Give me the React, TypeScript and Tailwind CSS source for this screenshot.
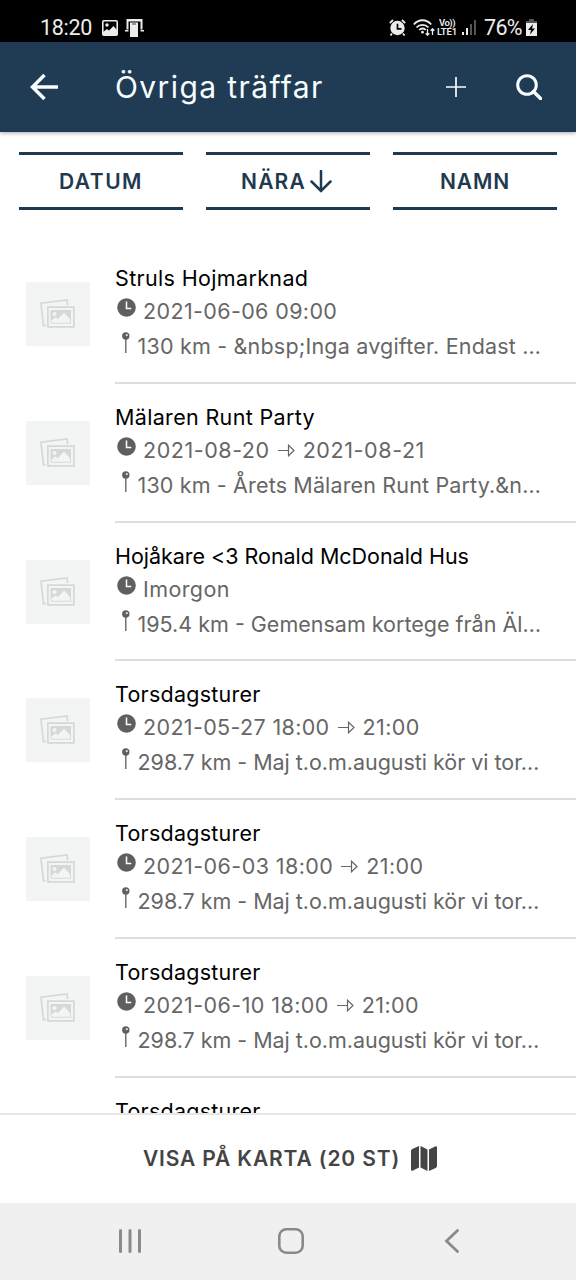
import clsx from 'clsx';

interface Meetup {
  title: string;
  titleClass: string;
  date?: string;
  dateClass?: string;
  end?: string;
  endClass?: string;
  info?: string;
  infoClass?: string;
}

const thursday = {
  title: 'Torsdagsturer',
  titleClass: 'tracking-[0.25px]',
  end: '21:00',
  endClass: 'tracking-[0.4px]',
  info: '298.7 km - Maj t.o.m.augusti kör vi tor…',
  infoClass: 'tracking-[-0.03px]',
};

const meetups: Meetup[] = [
  {
    title: 'Struls Hojmarknad',
    titleClass: 'tracking-[0.35px]',
    date: '2021-06-06 09:00',
    dateClass: 'tracking-[0.37px]',
    info: '130 km - &nbsp;Inga avgifter. Endast …',
    infoClass: 'tracking-[0.2px]',
  },
  {
    title: 'Mälaren Runt Party',
    titleClass: 'tracking-[0.33px]',
    date: '2021-08-20',
    dateClass: 'tracking-[0.55px]',
    end: '2021-08-21',
    endClass: 'tracking-[0.6px]',
    info: '130 km - Årets Mälaren Runt Party.&n…',
    infoClass: 'tracking-[0.15px]',
  },
  {
    title: 'Hojåkare <3 Ronald McDonald Hus',
    titleClass: 'tracking-[-0.03px]',
    date: 'Imorgon',
    dateClass: 'tracking-[0.4px]',
    info: '195.4 km - Gemensam kortege från Äl…',
    infoClass: 'tracking-[0px]',
  },
  { ...thursday, date: '2021-05-27 18:00', dateClass: 'tracking-[0.35px]' },
  { ...thursday, date: '2021-06-03 18:00', dateClass: 'tracking-[0.43px]' },
  { ...thursday, date: '2021-06-10 18:00', dateClass: 'tracking-[0.43px]' },
  { title: 'Torsdagsturer', titleClass: 'tracking-[0.25px]' },
];

function StatusBar() {
  return (
    <div className="flex h-[42px] shrink-0 items-center bg-black pl-[40px] pr-[39px] pt-[13px] font-[Roboto] text-[21.5px] leading-none text-[#ececec]">
      <span className="w-[53px] tracking-[-0.3px]">18:20</span>
      <svg className="ml-[9px] h-[16px] w-[16px]" viewBox="0 0 16 16">
        <rect x="0.8" y="0.8" width="14.4" height="14.4" rx="1" fill="none" stroke="#ececec" strokeWidth="1.6" />
        <circle cx="5" cy="5" r="1.7" fill="#ececec" />
        <path d="M1 12l4-3 2 1.5L11.5 6 15 10v5H1z" fill="#ececec" />
      </svg>
      <svg className="ml-[7px] h-[18px] w-[19px]" viewBox="0 0 19 18" fill="#ececec">
        <path d="M1.500 0h16v10.500h-2V2.500h-12v8h-2zM0 11h3.500v1.500H0zM15.500 11H19v1.500h-3.500z" />
        <path d="M5 3.500h8v14.500H5z" />
        <path d="M7 5h4" stroke="#444" />
      </svg>
      <div className="flex-1" />
      <svg className="h-[17px] w-[17px]" viewBox="0 0 17 17">
        <circle cx="8.500" cy="9" r="7.200" fill="#ececec" />
        <path d="M0.800 4.200L4 1M16.200 4.200L13 1M3 14.500L1.500 16.500M14 14.500l1.500 2" stroke="#ececec" strokeWidth="1.800" />
        <path d="M8.500 4.800v5h4" fill="none" stroke="#000" strokeWidth="1.700" />
      </svg>
      <svg className="ml-[7px] h-[17px] w-[22px]" viewBox="0 0 22 17" fill="none" stroke="#ececec">
        <path d="M0.800 5.500C5.500-0.200 13.500-0.200 18.200 5.500M3.500 8.500c3.300-3.600 8.700-3.600 12 0M6.200 11c1.900-2 4.700-2 6.600 0" strokeWidth="1.800" />
        <circle cx="9.500" cy="13.200" r="1.400" fill="#ececec" stroke="none" />
        <path d="M14.500 10v6M12.700 14.200l1.800 2 1.800-2M19.500 16v-6M17.700 11.800l1.800-2 1.800 2" strokeWidth="1.300" />
      </svg>
      <div className="ml-[2px] w-[22px] text-[9.500px] font-semibold leading-[8.500px]">
        <div className="whitespace-nowrap pl-[2px] tracking-[-0.5px]">Vo))</div>
        <div className="whitespace-nowrap tracking-[-0.2px]">LTE1</div>
      </div>
      <svg className="ml-[3px] h-[17px] w-[15px]" viewBox="0 0 15 17" fill="#ececec">
        <path d="M0 13h2v3H0zM4 9h2v7H4z" />
        <path d="M8 5h2v11H8zM12 1h2v15h-2z" fill="#555" />
      </svg>
      <span className="ml-[7px] w-[38px] tracking-[-0.7px]">76%</span>
      <svg className="ml-[4px] h-[17px] w-[11px]" viewBox="0 0 11 17">
        <path d="M3 0h5v2h3v5H0V2h3z" fill="#555" />
        <path d="M0 4h11v13H0z" fill="#ececec" />
        <path d="M7 5L2 11h3l-1 4.500L9 9.500H6z" fill="#000" />
      </svg>
    </div>
  );
}

function Header() {
  return (
    <header className="relative z-10 flex h-[90px] shrink-0 items-center bg-[#203c54] pl-[30px] pr-[34px] text-[#f8fdff] shadow-[0_1px_4px_rgba(0,0,0,0.35)]">
      <svg className="h-[28px] w-[28px]" viewBox="0 0 28 28" fill="none" stroke="currentColor" strokeWidth="3.500">
        <path d="M28 14H3M14.500 2L2.500 14l12 12" />
      </svg>
      <h1 className="ml-[57px] flex-1 whitespace-nowrap text-[30px] leading-none tracking-[1.4px]">Övriga träffar</h1>
      <svg className="h-[20px] w-[20px]" viewBox="0 0 20 20" stroke="currentColor" strokeWidth="1.700">
        <path d="M10 0v20M0 10h20" />
      </svg>
      <svg className="ml-[50px] h-[26px] w-[26px]" viewBox="0 0 26 26" fill="none" stroke="currentColor">
        <circle cx="11" cy="11" r="9.300" strokeWidth="3" />
        <path d="M17.500 17.500l7 7" strokeWidth="3.500" strokeLinecap="round" />
      </svg>
    </header>
  );
}

function SortButton({ label, labelClass, active }: { label: string; labelClass: string; active?: boolean }) {
  return (
    <button className="flex h-[58px] w-[164px] items-center justify-center border-y-[3px] border-[#1f3a50] text-[21px] font-semibold leading-none text-[#1f3a50]">
      <span className={clsx('whitespace-nowrap', labelClass)}>{label}</span>
      {active && (
        <svg className="ml-[4px] mr-[3px] h-[23px] w-[22px]" viewBox="0 0 22 23" fill="none" stroke="currentColor" strokeWidth="2.500">
          <path d="M11 1v20M1.500 11.500l9.500 9.500 9.500-9.500" strokeLinecap="round" />
        </svg>
      )}
    </button>
  );
}

function Thumbnail() {
  return (
    <div className="mt-[37px] flex h-[64px] w-[64px] shrink-0 items-center justify-center bg-[#f3f4f4]">
      <svg className="h-[30px] w-[36px]" viewBox="0 0 36 30" fill="none" stroke="#d6d8d8" strokeWidth="1.700">
        <path d="M6 26.500L3.500 26.800 0.900 4.200 27 1l0.600 5" />
        <path d="M7.900 8.200h26v19.600h-26z" />
        <path d="M10.500 11h20.500v13.700H10.500z" fill="#d6d8d8" stroke="none" />
        <circle cx="14.500" cy="15" r="2" fill="#f3f4f4" stroke="none" />
        <path d="M11.500 23.700v-2.500l4-2.700 2.500 1.500 6-6.500 6 6.500v3.700z" fill="#f3f4f4" stroke="none" />
      </svg>
    </div>
  );
}

function MeetupRow({ meetup }: { meetup: Meetup }) {
  return (
    <li className="flex h-[138.75px] shrink-0 pl-[26px]">
      <Thumbnail />
      <div className="ml-[25px] flex-1 border-b-2 border-[#dedede] pt-[17px] text-[21.500px] leading-[32px] text-[#666]">
        <h2 className={clsx('mb-px whitespace-nowrap text-black', meetup.titleClass)}>{meetup.title}</h2>
        {meetup.date && (
          <div className="flex h-[32px] whitespace-nowrap">
            <svg className="ml-[2px] mt-[3px] h-[19px] w-[19px]" viewBox="0 0 19 19">
              <circle cx="9.500" cy="9.500" r="9.300" fill="#5f5f5f" />
              <path d="M9.500 3.500v7h4.800" fill="none" stroke="#fff" strokeWidth="1.500" />
            </svg>
            <span className={clsx('ml-[7px]', meetup.dateClass)}>{meetup.date}</span>
            {meetup.end && (
              <>
                <svg className="ml-[8px] mt-[10px] h-[13px] w-[17px]" viewBox="0 0 17 13" fill="none" stroke="#666" strokeWidth="1.200">
                  <path d="M0 6.500h10.500M10.500 1.200v10.600l5.500-5.300z" />
                </svg>
                <span className={clsx('ml-[8px]', meetup.endClass)}>{meetup.end}</span>
              </>
            )}
          </div>
        )}
        {meetup.info && (
          <div className="mt-[3px] flex whitespace-nowrap">
            <svg className="ml-[6px] mt-[2px] h-[22px] w-[9px]" viewBox="0 0 9 22">
              <circle cx="4.800" cy="4" r="3.700" fill="#5f5f5f" />
              <circle cx="5.800" cy="3.200" r="1.100" fill="#ddd" />
              <path d="M4.800 7v14" stroke="#666" strokeWidth="1.400" />
            </svg>
            <span className={clsx('ml-[7.500px]', meetup.infoClass)}>{meetup.info}</span>
          </div>
        )}
      </div>
    </li>
  );
}

function MapButton() {
  return (
    <button className="flex h-[90px] shrink-0 items-center justify-center border-t-2 border-[#e6e6e6] bg-white pb-[2px] pl-[4px] text-[21px] font-semibold leading-none text-[#444]">
      <span className="whitespace-nowrap tracking-[0.85px]">VISA PÅ KARTA (20 ST)</span>
      <svg className="ml-[11px] h-[25px] w-[26px]" viewBox="0 0 26 25" fill="currentColor">
        <path d="M0 5q0-1.300 1.300-1.900L8 0v21.500L1.500 24.800Q0 25 0 24zM9.500 0L16.500 3.500V25l-7-3.500zM18 3.500L24.500 0.200Q26 0 26 1.300V20q0 1.300-1.300 1.900L18 25z" />
      </svg>
    </button>
  );
}

function NavigationBar() {
  return (
    <nav className="flex h-[77px] shrink-0 items-center bg-[#f0f0f0] pb-[2px] pl-[118px] text-[#8a8a8a]">
      <svg className="h-[26px] w-[24px]" viewBox="0 0 24 26" stroke="currentColor" strokeWidth="3" strokeLinecap="round">
        <path d="M2.500 2.500v21M12 2.500v21M21.500 2.500v21" />
      </svg>
      <svg className="ml-[136px] h-[26px] w-[26px]" viewBox="0 0 26 26" fill="none" stroke="currentColor" strokeWidth="2.600">
        <rect x="1.300" y="1.300" width="23.400" height="23.400" rx="7" />
      </svg>
      <svg className="ml-[140px] h-[26px] w-[16px]" viewBox="0 0 16 26" fill="none" stroke="currentColor" strokeWidth="2.800" strokeLinecap="round">
        <path d="M13.500 2.500L2.500 13l11 10.500" />
      </svg>
    </nav>
  );
}

export default function App() {
  return (
    <div className="flex h-[1280px] w-[576px] flex-col overflow-hidden bg-white font-[Inter,sans-serif]">
      <StatusBar />
      <Header />
      <main className="flex min-h-0 flex-1 flex-col overflow-hidden">
        <div className="flex shrink-0 justify-between px-[19px] pt-[20px]">
          <SortButton label="DATUM" labelClass="tracking-[1.5px]" />
          <SortButton label="NÄRA" labelClass="tracking-[1.2px]" active />
          <SortButton label="NAMN" labelClass="tracking-[0.9px]" />
        </div>
        <ul className="mt-[35px] flex flex-col">
          {meetups.map((meetup, index) => (
            <MeetupRow key={index} meetup={meetup} />
          ))}
        </ul>
      </main>
      <MapButton />
      <NavigationBar />
    </div>
  );
}
